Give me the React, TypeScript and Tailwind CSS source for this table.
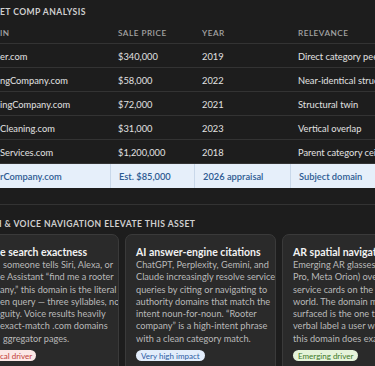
import React from "react";

const rows = [
  { d: "er.com", p: "$340,000", y: "2019", r: "Direct category peer" },
  { d: "ngCompany.com", p: "$58,000", y: "2022", r: "Near-identical structure" },
  { d: "ingCompany.com", p: "$72,000", y: "2021", r: "Structural twin" },
  { d: "Cleaning.com", p: "$31,000", y: "2023", r: "Vertical overlap" },
  { d: "Services.com", p: "$1,200,000", y: "2018", r: "Parent category ceiling" },
];

function Line({ children, className = "" }: { children: React.ReactNode; className?: string }) {
  return (
    <div className={"whitespace-nowrap h-[12.3px] leading-[12.3px] text-[9.2px] text-[#b9b9b9] " + className}>
      {children}
    </div>
  );
}

function Title({ children, className = "" }: { children: React.ReactNode; className?: string }) {
  return (
    <div className={"whitespace-nowrap h-[13px] leading-[13px] text-[10.5px] font-bold text-[#f2f2f2] " + className}>
      {children}
    </div>
  );
}

export default function App() {
  return (
    <div className="w-[375px] h-[366px] overflow-hidden bg-[#1d1d1d] font-['Lato',sans-serif] text-[#d6d6d6]">
      <div className="pt-[5px] h-[24px] leading-[14px] text-[8.6px] font-bold tracking-[0.05em] text-[#cfcfcf] whitespace-nowrap">
        ET COMP ANALYSIS
      </div>

      <div className="grid grid-cols-[110px_84px_96px_1fr] h-[20px] items-center border-b border-[#333333] text-[8.2px] font-semibold tracking-[0.06em] text-[#a3a3a3] whitespace-nowrap">
        <div>IN</div>
        <div className="pl-[8px]">SALE PRICE</div>
        <div className="pl-[8px]">YEAR</div>
        <div className="pl-[8px]">RELEVANCE</div>
      </div>

      {rows.map((row) => (
        <div
          key={row.d}
          className="grid grid-cols-[110px_84px_96px_1fr] h-[24px] items-center border-b border-[#333333] text-[9.3px] text-[#e2e2e2] whitespace-nowrap pt-[2px]"
        >
          <div>{row.d}</div>
          <div className="pl-[8px]">{row.p}</div>
          <div className="pl-[8px]">{row.y}</div>
          <div className="pl-[8px] overflow-hidden">{row.r}</div>
        </div>
      ))}

      <div className="grid grid-cols-[110px_84px_96px_1fr] h-[24px] bg-[#e6effa] text-[9.3px] font-semibold text-[#2d5a92] whitespace-nowrap">
        <div className="flex items-center pt-px">rCompany.com</div>
        <div className="flex items-center pt-px pl-[8px] border-l border-[#c9d8ea]">Est. $85,000</div>
        <div className="flex items-center pt-px pl-[8px] border-l border-[#c9d8ea]">2026 appraisal</div>
        <div className="flex items-center pt-px pl-[8px] border-l border-[#c9d8ea]">Subject domain</div>
      </div>

      <div className="mt-[16px] border-t border-[#333333]">
        <div className="pt-[12px] h-[29px] leading-[14px] text-[8.6px] font-bold tracking-[0.05em] text-[#cfcfcf] whitespace-nowrap -ml-[5px]">
          H &amp; VOICE NAVIGATION ELEVATE THIS ASSET
        </div>

        <div className="flex gap-[6px] -ml-[32px]">
          <div className="w-[151px] shrink-0 rounded-[7px] border border-[#3a3a3a] bg-[#2a2a2a] pl-[31px] pr-[10px] pt-[11px] h-[160px] overflow-hidden">
            <Title>e search exactness</Title>
            <Line className="pl-[3px]">someone tells Siri, Alexa, or</Line>
            <Line>e Assistant “find me a rooter</Line>
            <Line>any,” this domain is the literal</Line>
            <Line>en query — three syllables, no</Line>
            <Line>guity. Voice results heavily</Line>
            <Line>exact-match .com domains</Line>
            <Line className="pl-[3px]">ggregator pages.</Line>
            <div className="mt-[5px] -ml-[10px] flex w-fit h-[11px] items-center rounded-full bg-[#fbe8e6] pl-[10px] pr-[4px] text-[8px] text-[#c2413a] whitespace-nowrap">
              cal driver
            </div>
          </div>

          <div className="w-[151px] shrink-0 rounded-[7px] border border-[#3a3a3a] bg-[#2a2a2a] px-[10px] pt-[11px] h-[160px] overflow-hidden">
            <Title>AI answer-engine citations</Title>
            <Line>ChatGPT, Perplexity, Gemini, and</Line>
            <Line>Claude increasingly resolve service</Line>
            <Line>queries by citing or navigating to</Line>
            <Line>authority domains that match the</Line>
            <Line>intent noun-for-noun. “Rooter</Line>
            <Line>company” is a high-intent phrase</Line>
            <Line>with a clean category match.</Line>
            <div className="mt-[5px] flex w-fit h-[11px] items-center rounded-full bg-[#e2edfb] px-[5px] text-[8px] text-[#2c5ca3] whitespace-nowrap">
              Very high impact
            </div>
          </div>

          <div className="w-[151px] shrink-0 rounded-[7px] border border-[#3a3a3a] bg-[#2a2a2a] px-[10px] pt-[11px] h-[160px] overflow-hidden">
            <Title>AR spatial navigation</Title>
            <Line>Emerging AR glasses (Vision</Line>
            <Line>Pro, Meta Orion) overlay</Line>
            <Line>service cards on the physical</Line>
            <Line>world. The domain most likely</Line>
            <Line>surfaced is the one that fits the</Line>
            <Line>verbal label a user would say —</Line>
            <Line>this domain does exactly that.</Line>
            <div className="mt-[5px] flex w-fit h-[11px] items-center rounded-full bg-[#e5f3da] px-[5px] text-[8px] text-[#3d7a27] whitespace-nowrap">
              Emerging driver
            </div>
          </div>
        </div>
      </div>
    </div>
  );
}
